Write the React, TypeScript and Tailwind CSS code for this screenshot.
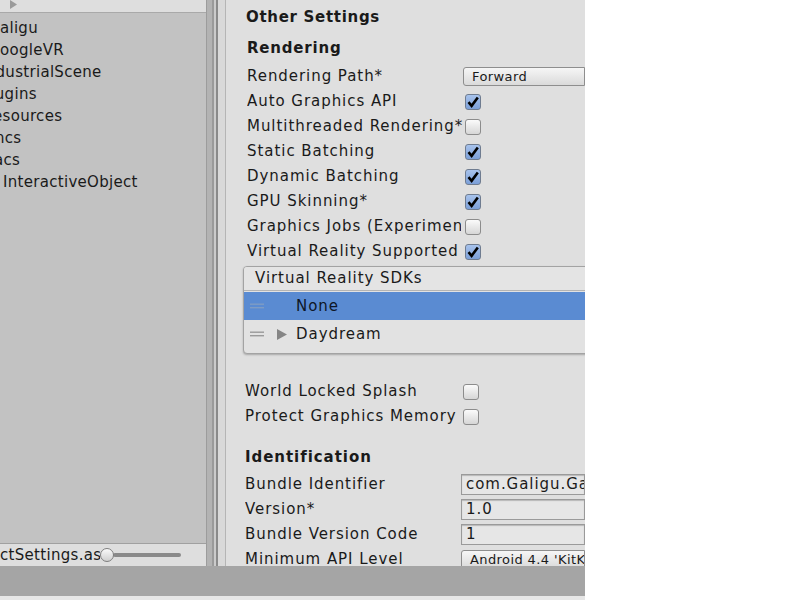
import React from "react";

const font = { fontFamily: "'DejaVu Sans', Verdana, sans-serif" };

function Check({ on, cls = "" }: { on: boolean; cls?: string }) {
  if (on) {
    return (
      <div className={`w-[16px] h-[16px] rounded-[3px] border border-[#6f7c90] bg-gradient-to-b from-[#a8c3ec] to-[#7b9fd8] flex items-center justify-center shrink-0 ${cls}`}>
        <svg width="14" height="14" viewBox="0 0 14 14">
          <path d="M2.5 7.2 L5.6 10.8 L11.8 2.4" fill="none" stroke="#000" strokeWidth="2.6" strokeLinejoin="miter" strokeLinecap="butt" />
        </svg>
      </div>
    );
  }
  return <div className={`w-[16px] h-[16px] rounded-[3px] border border-[#8c8c8c] bg-gradient-to-b from-[#fbfbfb] to-[#d6d6d6] shrink-0 ${cls}`} />;
}

function Row({ label, children, lw = "w-[218px]" }: { label: string; children?: React.ReactNode; lw?: string }) {
  return (
    <div className="h-[25px] flex items-center">
      <div className={`${lw} shrink-0 overflow-hidden whitespace-nowrap text-[15px] tracking-[0.95px] text-[#1a1a1a]`}>{label}</div>
      {children}
    </div>
  );
}

function Field({ text }: { text: string }) {
  return (
    <div className="h-[21px] flex-1 border border-[#9a9a9a] bg-[#e6e6e6] shadow-[inset_0_1px_1px_rgba(0,0,0,0.2)] flex items-center pl-[4px] whitespace-nowrap overflow-hidden text-[15px] tracking-[0.95px] text-[#1a1a1a]">
      {text}
    </div>
  );
}

function Drop({ text }: { text: string }) {
  return (
    <div className="h-[19px] flex-1 rounded-l-[3px] border border-[#8e8e8e] bg-gradient-to-b from-[#f6f6f6] to-[#dadada] flex items-center pl-[8px] whitespace-nowrap overflow-hidden text-[13px] tracking-[0.4px] text-[#1a1a1a]">
      {text}
    </div>
  );
}

function Handle({ color }: { color: string }) {
  return (
    <svg width="16" height="6" viewBox="0 0 16 6" className="shrink-0">
      <rect x="0" y="0.5" width="14" height="1.4" fill={color} />
      <rect x="0" y="4" width="14" height="1.4" fill={color} />
    </svg>
  );
}

const leftItems: { t: string; ml: string }[] = [
  { t: "Galigu", ml: "ml-[-12px]" },
  { t: "GoogleVR", ml: "ml-[-12px]" },
  { t: "IndustrialScene", ml: "ml-[-19px]" },
  { t: "Plugins", ml: "ml-[-19px]" },
  { t: "Resources", ml: "ml-[-17px]" },
  { t: "ncs", ml: "ml-[-5px]" },
  { t: "acs", ml: "ml-[-6px]" },
  { t: "InteractiveObject", ml: "ml-[3px]" },
];

export default function App() {
  return (
    <div className="w-[800px] h-[600px] bg-white flex overflow-hidden" style={font}>
      <div className="w-[585px] h-[600px] flex flex-col shrink-0">
        <div className="h-[566px] flex overflow-hidden">
          {/* Left project panel */}
          <div className="w-[206px] shrink-0 bg-[#c2c2c2] flex flex-col overflow-hidden">
            <div className="h-[13px] bg-[#dedede] border-b border-[#a9a9a9] flex items-end pl-[9px] shrink-0">
              <svg width="10" height="9" viewBox="0 0 10 9" className="mb-[3px]">
                <path d="M1 0 L8 4.5 L1 9 Z" fill="#9a9a9a" />
              </svg>
            </div>
            <div className="flex-1 pt-[4px] overflow-hidden">
              {leftItems.map((it) => (
                <div key={it.t} className="h-[22px] flex items-center whitespace-nowrap text-[15px] tracking-[0.3px] text-[#1a1a1a]">
                  <span className={it.ml}>{it.t}</span>
                </div>
              ))}
            </div>
            <div className="h-[23px] shrink-0 bg-[#dedede] border-t border-[#a0a0a0] flex items-center overflow-hidden">
              <div className="w-[100px] shrink-0 overflow-hidden whitespace-nowrap text-[15px] tracking-[0.3px] text-[#1a1a1a]">ctSettings.asset</div>
              <div className="flex items-center">
                <div className="w-[14px] h-[14px] rounded-full border border-[#7e7e7e] bg-gradient-to-b from-[#fafafa] to-[#d0d0d0] shrink-0 z-10" />
                <div className="w-[68px] h-[4px] rounded-full bg-[#8a8a8a] ml-[-1px]" />
              </div>
            </div>
          </div>
          {/* Divider */}
          <div className="w-[19px] shrink-0 flex">
            <div className="w-[1px] bg-[#9c9c9c]" />
            <div className="w-[5px] bg-[#b3b3b3]" />
            <div className="w-[2px] bg-[#9a9a9a]" />
            <div className="w-[2px] bg-[#cbcbcb]" />
            <div className="w-[2px] bg-[#8a8a8a]" />
            <div className="w-[7px] bg-[#d9d9d9]" />
          </div>
          {/* Inspector */}
          <div className="flex-1 bg-[#dfdfdf] border-l border-[#b5b5b5] overflow-hidden pl-[20px] pt-[1px]">
            <div className="h-[32px] flex items-center whitespace-nowrap text-[15px] font-bold tracking-[0.7px] text-[#1a1a1a]">Other Settings</div>
            <div className="h-[31px] flex items-center pl-[1px] whitespace-nowrap text-[15px] font-bold tracking-[0.8px] text-[#1a1a1a]">Rendering</div>
            <div className="pl-[1px]">
              <Row label="Rendering Path*" lw="w-[216px]">
                <Drop text="Forward" />
              </Row>
              <Row label="Auto Graphics API"><Check on /></Row>
              <Row label="Multithreaded Rendering*"><Check on={false} /></Row>
              <Row label="Static Batching"><Check on /></Row>
              <Row label="Dynamic Batching"><Check on /></Row>
              <Row label="GPU Skinning*"><Check on /></Row>
              <Row label="Graphics Jobs (Experimental)*" lw="w-[214px]"><Check on={false} cls="ml-[4px]" /></Row>
              <Row label="Virtual Reality Supported"><Check on /></Row>
            </div>
            {/* VR SDK list */}
            <div className="mt-[2px] ml-[-3px] mr-[-6px] rounded-[4px] border border-[#a3a3a3] bg-[#e2e2e2] shadow-[0_1px_2px_rgba(0,0,0,0.25)] overflow-hidden">
              <div className="h-[24px] bg-[#e4e4e4] border-b border-[#b4b4b4] flex items-center pl-[11px] whitespace-nowrap text-[15px] tracking-[0.95px] text-[#1a1a1a]">
                Virtual Reality SDKs
              </div>
              <div className="h-[28px] mt-[1px] bg-[#5a8bd2] flex items-center pl-[6px] whitespace-nowrap text-[15px] tracking-[0.95px] text-[#0e1626]">
                <Handle color="#7e9cc4" />
                <span className="ml-[30px]">None</span>
              </div>
              <div className="h-[28px] flex items-center pl-[6px] whitespace-nowrap text-[15px] tracking-[0.95px] text-[#1a1a1a]">
                <Handle color="#9a9a9a" />
                <svg width="11" height="11" viewBox="0 0 11 11" className="ml-[11px] shrink-0">
                  <path d="M0 0 L10 5.5 L0 11 Z" fill="#858585" />
                </svg>
                <span className="ml-[8px]">Daydream</span>
              </div>
              <div className="h-[5px]" />
            </div>
            <div className="mt-[25px] ml-[-1px]">
              <Row label="World Locked Splash"><Check on={false} /></Row>
              <Row label="Protect Graphics Memory"><Check on={false} /></Row>
            </div>
            <div className="mt-[13px] h-[30px] ml-[-1px] flex items-center whitespace-nowrap text-[15px] font-bold tracking-[0.95px] text-[#1a1a1a]">Identification</div>
            <div className="ml-[-1px]">
              <Row label="Bundle Identifier" lw="w-[216px]"><Field text="com.Galigu.GalaxyVR" /></Row>
              <Row label="Version*" lw="w-[216px]"><Field text="1.0" /></Row>
              <Row label="Bundle Version Code" lw="w-[216px]"><Field text="1" /></Row>
              <Row label="Minimum API Level" lw="w-[216px]">
                <Drop text="Android 4.4 'KitKat' (API level 19)" />
              </Row>
            </div>
          </div>
        </div>
        <div className="h-[30px] bg-[#a5a5a5] shrink-0" />
        <div className="flex-1 bg-[#e6e6e6]" />
      </div>
    </div>
  );
}
